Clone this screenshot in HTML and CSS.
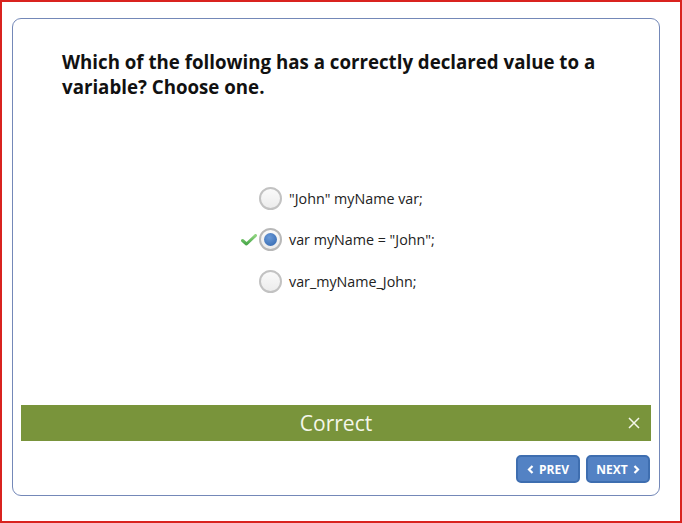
FILE: index.html
```html
<!DOCTYPE html>
<html>
<head>
<meta charset="utf-8">
<link rel="stylesheet" href="styles.css">
</head>
<body>
<div class="frame">
  <div class="card">
    <h1 class="question">Which of the following has a correctly declared value to a variable? Choose one.</h1>
    <div class="options">
      <div class="option">
        <span class="mark"></span>
        <span class="radio"></span>
        <span class="label">"John" myName var;</span>
      </div>
      <div class="option">
        <span class="mark"><svg width="16" height="12" viewBox="0 0 16 12"><defs><linearGradient id="g" x1="0" y1="0" x2="0" y2="1"><stop offset="0" stop-color="#8fd47f"/><stop offset="1" stop-color="#4aa84a"/></linearGradient></defs><path d="M1.5 6.5 L5.5 10 L14.5 1.5" fill="none" stroke="url(#g)" stroke-width="3" stroke-linecap="round" stroke-linejoin="round"/></svg></span>
        <span class="radio checked"><span class="dot"></span></span>
        <span class="label">var myName = "John";</span>
      </div>
      <div class="option">
        <span class="mark"></span>
        <span class="radio"></span>
        <span class="label">var_myName_John;</span>
      </div>
    </div>
    <div class="feedback">
      <span class="feedback-text">Correct</span>
      <svg class="close" width="12" height="12" viewBox="0 0 12 12"><path d="M1 1 L11 11 M11 1 L1 11" stroke="#f4f7ea" stroke-width="1.5" fill="none"/></svg>
    </div>
    <div class="nav">
      <button class="btn"><svg class="chev" width="7" height="9" viewBox="0 0 7 9"><path d="M5.5 1 L2 4.5 L5.5 8" fill="none" stroke="#fff" stroke-width="2.2"/></svg>PREV</button>
      <button class="btn">NEXT<svg class="chev" width="7" height="9" viewBox="0 0 7 9"><path d="M1.5 1 L5 4.5 L1.5 8" fill="none" stroke="#fff" stroke-width="2.2"/></svg></button>
    </div>
  </div>
</div>
</body>
</html>
```
FILE: styles.css
```css
html, body {
  margin: 0;
  padding: 0;
  background: #fff;
}
body {
  width: 682px;
  height: 523px;
  font-family: "Open Sans", "DejaVu Sans", sans-serif;
}
.frame {
  box-sizing: border-box;
  width: 682px;
  height: 523px;
  border: 2px solid #d9231f;
  padding: 16px 20px 0 10px;
}
.card {
  box-sizing: border-box;
  width: 648px;
  height: 478px;
  border: 1px solid #7488b8;
  border-radius: 9px;
  padding: 0 8px;
  display: flex;
  flex-direction: column;
}
.question {
  margin: 30px 0 0 41px;
  width: 560px;
  font-size: 18.7px;
  font-weight: 700;
  line-height: 25px;
  color: #111;
}
.options {
  margin-top: 87px;
  display: flex;
  flex-direction: column;
  align-items: center;
  gap: 17.5px;
  padding-left: 10px;
}
.option {
  display: flex;
  align-items: center;
  height: 24px;
  width: 200px;
}
.mark {
  width: 18px;
  display: flex;
  align-items: center;
  justify-content: flex-start;
}
.radio {
  box-sizing: border-box;
  width: 23px;
  height: 23px;
  border-radius: 50%;
  border: 2px solid #c2c2c2;
  background: linear-gradient(#fafafa, #ececec);
  display: flex;
  align-items: center;
  justify-content: center;
  margin-right: 7px;
}
.radio.checked {
  border-color: #b8b8b8;
}
.dot {
  width: 13px;
  height: 13px;
  border-radius: 50%;
  background: radial-gradient(circle at 40% 35%, #6a9ad8, #2f64ac);
}
.label {
  font-size: 14.3px;
  color: #222;
  white-space: nowrap;
}
.feedback {
  margin-top: 112px;
  height: 36px;
  background: #79943b;
  display: flex;
  align-items: center;
  justify-content: center;
  position: relative;
}
.feedback-text {
  color: #f4f7ea;
  font-size: 21px;
}
.close {
  position: absolute;
  right: 11px;
  top: 12px;
}
.nav {
  margin-top: 14px;
  display: flex;
  justify-content: flex-end;
  gap: 6px;
  padding-right: 1px;
}
.btn {
  box-sizing: border-box;
  width: 64px;
  height: 28px;
  border: 2px solid #3e6eb0;
  border-radius: 5px;
  background: #5382c4;
  color: #fff;
  font-family: "Open Sans", sans-serif;
  font-weight: 700;
  font-size: 12px;
  padding: 0;
  display: flex;
  align-items: center;
  justify-content: center;
  gap: 5px;
}
```
